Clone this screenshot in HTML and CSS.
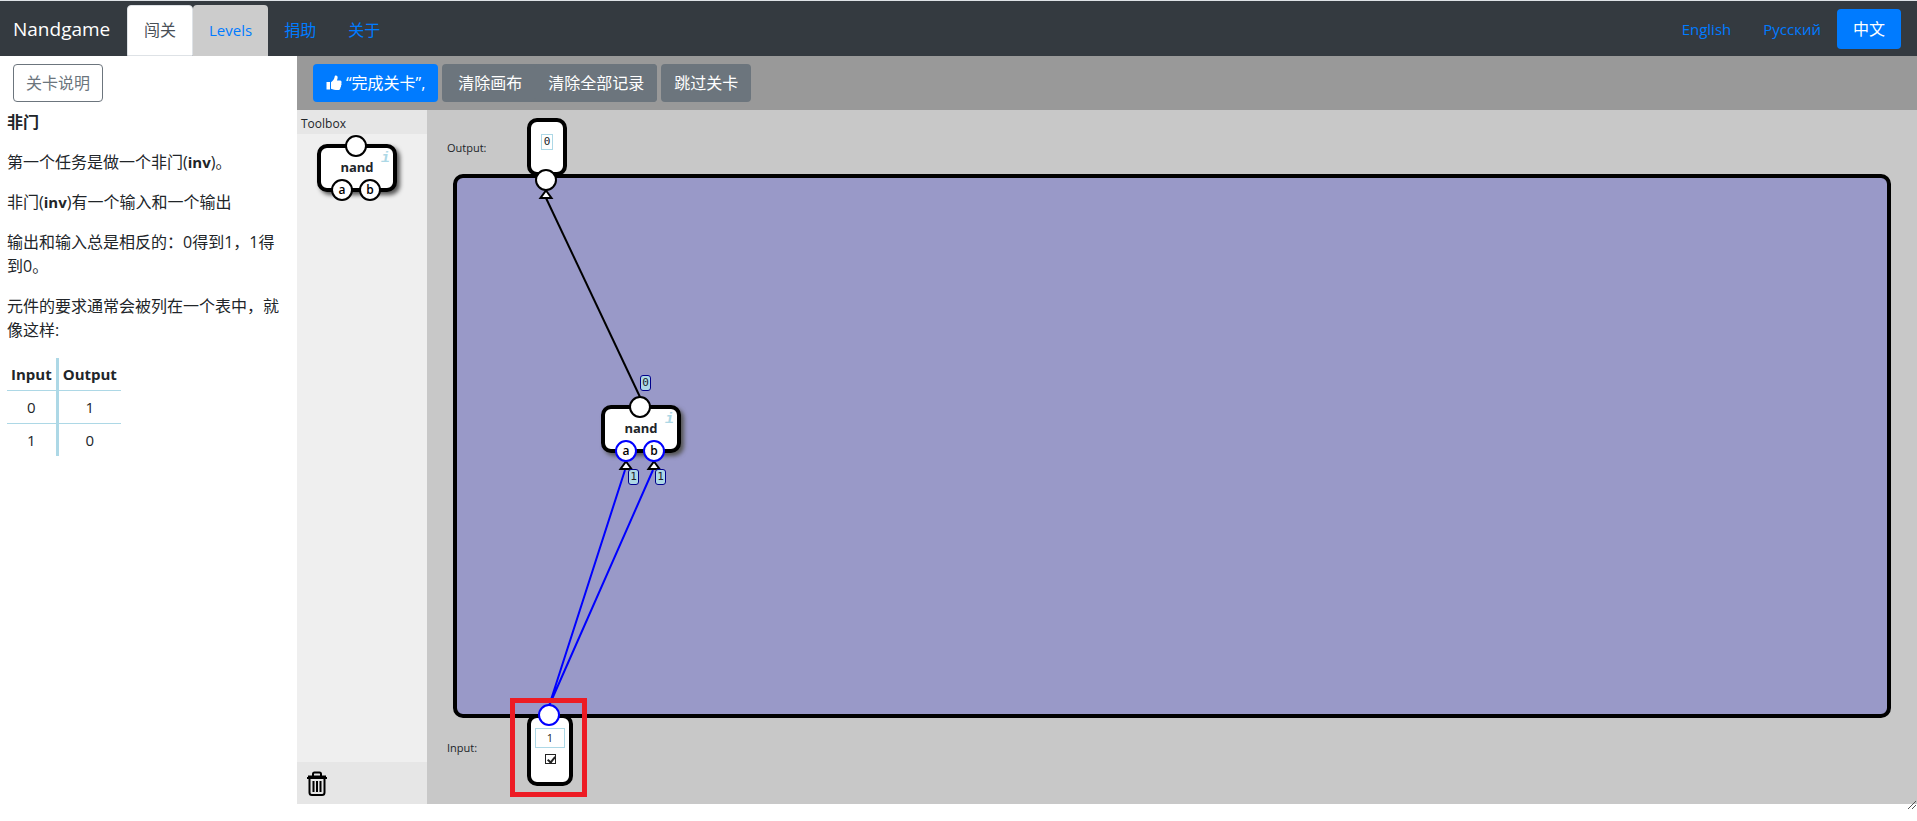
FILE: index.html
```html
<!DOCTYPE html>
<html lang="zh">
<head>
<meta charset="utf-8">
<title>Nandgame</title>
<link rel="stylesheet" href="styles.css">
</head>
<body>
<nav class="navbar">
  <a class="brand" href="#">Nandgame</a>
  <div class="tabs">
    <a class="tab active" href="#">闯关</a>
    <a class="tab shaded" href="#">Levels</a>
    <a class="tab" href="#">捐助</a>
    <a class="tab" href="#">关于</a>
  </div>
  <div class="languages">
    <a class="pill" href="#">English</a>
    <a class="pill" href="#">Русский</a>
    <a class="pill current" href="#">中文</a>
  </div>
</nav>
<main class="main">
  <aside class="guide">
    <button class="btn outline" type="button">关卡说明</button>
    <h1>非门</h1>
    <p>第一个任务是做一个非门(<b>inv</b>)。</p>
    <p>非门(<b>inv</b>)有一个输入和一个输出</p>
    <p>输出和输入总是相反的：0得到1，1得到0。</p>
    <p>元件的要求通常会被列在一个表中，就像这样:</p>
    <table class="truth">
      <thead><tr><th>Input</th><th>Output</th></tr></thead>
      <tbody>
        <tr><td>0</td><td>1</td></tr>
        <tr><td>1</td><td>0</td></tr>
      </tbody>
    </table>
  </aside>
  <section class="stage">
    <div class="toolbar">
      <button class="btn primary" type="button">
        <svg width="16" height="16" viewBox="0 0 16 16" fill="#fff" aria-hidden="true"><path d="M0.5 7H4V14.500H0.500Z"/><path d="M5 7.200C6.500 6 8 4.500 8.500 2.500C8.700 1.200 9 0.600 9.800 0.600C11.300 0.600 11.800 1.800 11.600 3C11.500 4 11.200 4.800 10.900 5.600H14C15.500 5.600 16 7.200 15.300 8.200C15.700 9 15.600 10 14.900 10.600C15.200 11.500 14.900 12.300 14.300 12.700C14.400 14.200 13.500 15 12 15C9 15 7 14.800 5 13.800Z"/></svg>
        <span>“完成关卡”,</span>
      </button>
      <div class="group">
        <button class="btn secondary" type="button">清除画布</button>
        <button class="btn secondary" type="button">清除全部记录</button>
      </div>
      <button class="btn secondary" type="button">跳过关卡</button>
    </div>
    <div class="board">
      <div class="toolbox">
        <h2>Toolbox</h2>
        <div class="shelf">
          <div class="gate">
            <i class="info">i</i><span class="name">nand</span>
            <span class="pin out"></span><span class="pin a">a</span><span class="pin b">b</span>
          </div>
        </div>
        <div class="bin">
          <svg width="22" height="25" viewBox="0 0 22 25" fill="none" stroke="#000" aria-label="Trash" role="img"><path d="M7 5V3q0-1.500 1.500-1.500h5Q15 1.500 15 3v2" stroke-width="2"/><path d="M2 5.500h18M1 7h20" stroke-width="2"/><path d="M3.500 8v13.500q0 2.500 2.500 2.500h10q2.500 0 2.500-2.500V8" stroke-width="2"/><path d="M7.500 10v11M11 10v11M14.500 10v11" stroke-width="2"/></svg>
        </div>
      </div>
      <div class="canvas">
        <div class="lane">Output:</div>
        <div class="field"></div>
        <div class="lane bottom">Input:</div>

        <div class="node output-node"><span class="bit">0</span></div>
        <div class="node input-node">
          <input class="value" type="text" value="1" aria-label="Input value">
          <input class="tick" type="checkbox" checked aria-label="Input on">
        </div>
        <svg class="wires" width="300" height="694" viewBox="0 0 300 694" fill="none" aria-hidden="true">
          <g stroke-width="2">
            <path d="M119 88L213 287" stroke="#000"/>
            <path d="M198 360L122 596M226 360L122 596" stroke="#00f"/>
          </g>
          <g fill="#fff" stroke="#000" stroke-width="2">
            <path d="M119 80.500l5.500 7.500h-11z"/>
            <path d="M199 351.500l5.500 7.500h-11z"/>
            <path d="M227 351.500l5.500 7.500h-11z"/>
          </g>
        </svg>
        <div class="gate placed">
          <i class="info">i</i><span class="name">nand</span>
          <span class="pin out"></span><span class="pin a live">a</span><span class="pin b live">b</span>
        </div>
        <span class="pin sink"></span>
        <span class="pin source live"></span>
        <span class="signal s-out">0</span>
        <span class="signal s-a">1</span>
        <span class="signal s-b">1</span>
        <div class="marker"></div>
        <svg class="grip" width="10" height="10" viewBox="0 0 10 10" stroke="#555" aria-hidden="true"><path d="M1 9L9 1M5 9L9 5"/></svg>
      </div>
    </div>
  </section>
</main>
</body>
</html>
```
FILE: styles.css
```css
* { box-sizing: border-box; }
body {
  margin: 0;
  min-height: 100vh;
  display: flex;
  flex-direction: column;
  background: #fff;
  color: #212529;
  font: 16px/24px "Open Sans", "Noto Sans CJK SC", sans-serif;
}
a { color: #007bff; text-decoration: none; }
button, input { font: inherit; }

.navbar {
  display: flex;
  align-items: flex-end;
  height: 56px;
  padding: 0 16px 0 13px;
  border-top: 1px solid #dee2e6;
  background: #343a40;
}
.brand { align-self: center; width: 114px; color: #fff; font-size: 19px; }
.tabs { display: flex; }
.tab { padding: 12px 16px 14px; border-top: 1px solid transparent; border-radius: 4px 4px 0 0; }
.tab.active { padding-bottom: 13px; background: #fff; border: 1px solid #dee2e6; color: #495057; }
.tab.shaded { background: #ccc; font-size: 15px; }
.languages { display: flex; align-self: center; margin-left: auto; font-size: 15px; }
.pill { padding: 8px 16px; border-radius: 4px; }
.pill.current { background: #007bff; color: #fff; font-size: 16px; }

.main { display: flex; flex: 1; margin-bottom: 17px; }
.guide { width: 297px; padding: 8px 16px 0 7px; }
.guide h1 { margin: 8px 0 16px; font-size: 16px; line-height: 24px; }
.guide p { margin: 0 0 16px; }
.guide b { font-size: 15px; }

.btn {
  height: 38px;
  padding: 0 12px;
  border: 1px solid transparent;
  border-radius: 4px;
  color: #fff;
  white-space: nowrap;
}
.outline { margin-left: 6px; background: #fff; border-color: #6c757d; color: #6c757d; }
.primary { display: flex; align-items: center; gap: 4px; background: #007bff; }
.secondary { background: #6c757d; }
.group { display: flex; padding-left: 3px; border-radius: 4px; background: #6c757d; }

.truth { border-collapse: collapse; font-size: 15px; text-align: center; }
.truth th, .truth td { padding: 4px; }
.truth tr > :first-child { border-right: 3px solid #add8e6; }
.truth tbody tr { border-top: 1px solid #add8e6; }

.stage { display: flex; flex: 1; flex-direction: column; min-width: 0; }
.toolbar { display: flex; gap: 4px; padding: 8px 16px; background: #999; }
.board { display: flex; flex: 1; }
.toolbox { display: flex; flex-direction: column; width: 130px; background: #efefef; }
.toolbox h2 { margin: 0; padding: 3px 4px 0; background: #e6e6e6; font-size: 12px; font-weight: 400; line-height: 21px; }
.shelf { flex: 1; padding: 10px 20px; }
.bin { display: flex; padding: 9px 9px 8px; background: #e6e6e6; }

.canvas { position: relative; display: flex; flex: 1; flex-direction: column; padding: 0 26px; background: #c8c8c8; }
.lane { height: 64px; margin-left: -6px; padding-top: 26px; font-size: 11px; }
.lane.bottom { height: 86px; padding-top: 18px; }
.field { flex: 1; border: 4px solid #000; border-radius: 10px; background: #9999c8; }

.gate {
  position: relative;
  width: 80px;
  height: 48px;
  border: 4px solid #000;
  border-radius: 10px;
  background: #fff;
  box-shadow: 3px 3px 4px #555;
  font-size: 13px;
  text-align: center;
}
.placed { position: absolute; left: 174px; top: 295px; }
.name { display: block; padding-top: 7px; font-weight: 700; }
.info { position: absolute; right: 3px; top: 3px; color: #add8e6; font: italic 700 15px/16px "Liberation Mono", monospace; }
.pin {
  position: absolute;
  width: 22px;
  height: 22px;
  border: 2px solid #000;
  border-radius: 50%;
  background: #fff;
  color: #000;
  font-size: 12px;
  font-weight: 600;
  line-height: 17px;
  text-align: center;
}
.pin.live { border-color: #00f; }
.pin.out { left: 24px; top: -13px; }
.pin.a { left: 10px; top: 31px; }
.pin.b { left: 38px; top: 31px; }
.sink { left: 108px; top: 59px; }
.source { left: 111px; top: 594px; }

.node { position: absolute; left: 100px; display: flex; flex-direction: column; align-items: center; border: 4px solid #000; border-radius: 10px; background: #fff; }
.output-node { top: 8px; width: 40px; height: 58px; padding-top: 12px; }
.input-node { top: 604px; width: 46px; height: 72px; padding-top: 10px; gap: 6px; }
.bit { width: 12px; height: 16px; border: 1px solid #add8e6; font: 11px/14px "DejaVu Sans Mono", monospace; text-align: center; }
.value { width: 30px; height: 20px; padding: 0; border: 1px solid #add8e6; background: #fff; color: #212529; font-size: 11px; text-align: center; }
.tick { appearance: none; position: relative; width: 11px; height: 10px; margin: 0; border: 1px solid #222; background: #fff; }
.tick:checked::after { content: ""; position: absolute; left: 3px; top: 0; width: 3px; height: 6px; border: solid #222; border-width: 0 2px 2px 0; transform: rotate(40deg); }
.wires { position: absolute; left: 0; top: 0; }
.signal { position: absolute; width: 11px; height: 16px; border: 1px solid #00008b; border-radius: 3px; background: #add8e6; font: 11px/14px "DejaVu Sans Mono", monospace; text-align: center; }
.s-out { left: 213px; top: 265px; }
.s-a { left: 201px; top: 359px; }
.s-b { left: 228px; top: 359px; }
.marker { position: absolute; left: 83px; top: 588px; width: 77px; height: 99px; border: 5px solid #ed1c24; }
.grip { position: absolute; right: 0; bottom: -6px; }
```
